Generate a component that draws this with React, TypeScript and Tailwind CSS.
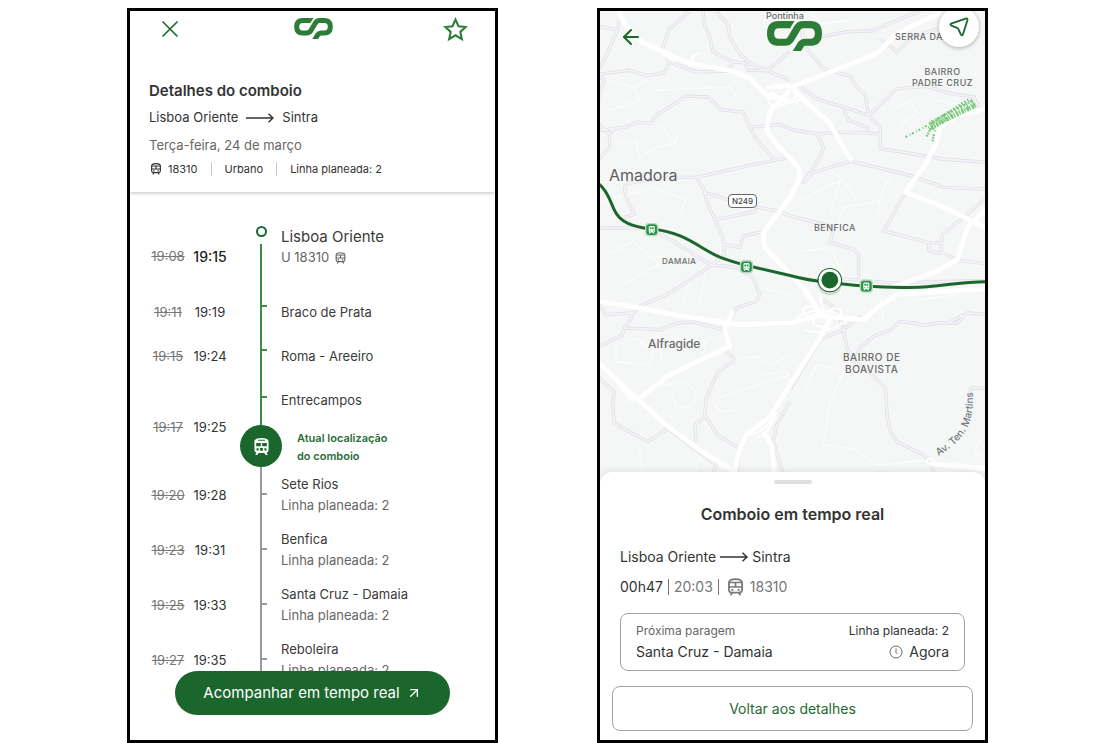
import { ArrowLeft, ArrowUpRight, X } from "lucide-react";

type Stop = {
  name: string;
  planned: string;
  expected: string;
  platform: number;
};

const upcomingStops: Stop[] = [
  { name: "Sete Rios", planned: "19:20", expected: "19:28", platform: 2 },
  { name: "Benfica", planned: "19:23", expected: "19:31", platform: 2 },
  { name: "Santa Cruz - Damaia", planned: "19:25", expected: "19:33", platform: 2 },
  { name: "Reboleira", planned: "19:27", expected: "19:35", platform: 2 },
];

const passedStops = [
  { name: "Braco de Prata", planned: "19:11", expected: "19:19" },
  { name: "Roma - Areeiro", planned: "19:15", expected: "19:24" },
];

// Map geometry, in map units (3 per pixel at the base width)
const streets = [
  "M30 80L85 90L45 180L30 205M90 60L85 90",
  "M30 222L120 210L170 226L225 218L240 185L218 150L238 90L300 33",
  "M238 185L320 215L410 213L430 185L465 188L475 210L530 211L600 155",
  "M340 33L345 75L360 110L370 155L430 185",
  "M380 33L415 75L420 110L450 160L480 190L530 211L600 240",
  "M30 390L110 380L140 365L185 368L200 345L290 287L355 290L395 328L460 335L480 380L495 410L555 480",
  "M480 380L570 372L605 387L680 400L770 395L870 400",
  "M30 225L45 240L30 290M30 370L60 400L62 440L30 475M60 400L75 385",
  "M635 85L640 135L700 205L780 228L795 255L825 285L835 345",
  "M690 110L770 95L850 92L920 60L990 33M870 115L920 155L960 115L1040 85",
  "M835 345L920 265L1010 258L1080 280L1150 290L1165 325",
  "M625 255L680 295L760 320L835 345L870 380L870 445L940 455L1050 475L1185 485",
  "M760 325L775 360L830 380L835 395",
  "M680 400L700 440L690 470L640 545L670 515L780 482L860 500L960 525L1060 560L1185 565",
  "M945 575L880 690L1015 725L1060 725M1015 725L1015 750L1050 757L1055 700L1130 640L1185 590",
  "M600 645L700 670L730 680L720 725L790 745L805 760L805 830M665 840L700 828L900 845L1185 838",
  "M1185 787L1100 778L1060 757",
  "M1070 965L1130 935L1185 940",
  "M600 470L500 490L320 530L345 570L350 600L400 710L405 760L370 790",
  "M320 530L230 530L115 548L105 560L110 590L135 640L105 650",
  "M345 575L480 615L560 630L600 645M375 657L460 640L500 630",
  "M405 730L450 740L460 705L530 690",
  "M30 682L170 680L250 720L360 790L440 800L490 830L510 880L500 900L440 920L420 960",
  "M370 790L250 870L210 890L150 915L120 950M30 910L50 940L130 935",
  "M30 1035L100 1000L105 980L215 985L260 965L310 962L400 985M105 980L130 948",
  "M30 1130L75 1170L70 1210L75 1265L175 1320L235 1280L320 1345L380 1390L365 1430",
  "M410 1050L435 1075L385 1110L350 1190L345 1240L385 1300L450 1340L440 1430",
  "M345 1245L315 1270L320 1320",
  "M600 1200L560 1270L550 1320L585 1430M600 1165L690 1015L760 985",
  "M760 985L770 1040L800 1085L850 1125L885 1160L890 1240L900 1290L920 1320L1000 1360L1020 1380L1035 1430",
  "M800 1060L810 1040L850 1005L900 985L930 960L970 965L1000 972L1040 965L1100 965L1120 945",
  "M1185 1160L1140 1160L1138 1200",
  "M760 985L740 925L700 895M760 985L810 945",
];

const highways = [
  "M90 33Q100 85 165 130L300 190L430 213L480 235L530 285L600 300",
  "M600 262L760 200L860 160L910 110L960 80L1050 40",
  "M600 270L540 335L530 390L560 430L625 500L630 530L600 590L520 695L525 740L640 860L700 950",
  "M610 270L720 370L770 460L785 480",
  "M1185 325L1100 345L1050 380L1035 430L1005 490L945 575L1050 615L1185 680",
  "M1185 625L1130 680L1100 775L1040 810L900 860",
  "M1185 862L920 880L860 920L820 955L700 945",
  "M30 900L150 920L280 945L450 970L600 965L700 940",
  "M430 930L405 985L420 1035L240 1120L150 1190L115 1190",
  "M30 1085L120 1170L230 1270L330 1345L435 1410",
  "M450 1340L470 1300L540 1245L600 1150L690 1010L720 950",
  "M520 1290L545 1330L555 1430M435 1410L450 1340",
  "M1020 1385L1185 1400M540 260L600 255",
];

const lanes = [
  "M60 240L130 260L180 240M130 260L150 300L60 330M200 270L420 260M420 260L440 290",
  "M90 430L140 420L150 470L200 440L250 430L270 400M210 370L260 430",
  "M40 600L200 560L290 600L270 640M60 760L130 720L210 790L100 850",
  "M280 910L300 840L350 810L330 900M520 860L600 880",
  "M640 600L700 560L750 540L720 640M740 680L760 620L870 600",
  "M860 640L880 560L900 530M640 750L720 740L760 820L750 880",
  "M80 1030L140 1010L190 1050L180 1090L80 1080L80 1030M200 1000L220 1080M260 1010L350 1020L340 1060",
  "M220 1150L280 1140L320 1170L310 1210L260 1220L245 1170M380 1190L600 1120M370 1200L390 1230L440 1225",
  "M440 1075L500 1065L540 1090L600 1060M510 1120L590 1110L600 1140M150 1330L160 1430M310 1430L330 1370",
  "M645 1160L680 1090L760 1110L720 1200L700 1330L790 1340L860 1390L1010 1375",
  "M700 490L760 540L800 600M1040 300L1100 310M900 330L960 300L980 340L930 370",
  "M880 960L870 890M960 900L1100 880M1170 1310L1150 1350L1185 1370M660 40L700 70L790 60",
];

const rail =
  "M28 549C55 567 65 607 75 627C92 665 130 677 185 684C290 692 340 752 400 772C440 786 470 794 500 800L600 823Q650 837 720 844Q800 854 850 856Q960 861 1010 857C1080 852 1120 841 1190 842";

function CpLogo({ className }: { className?: string }) {
  return (
    <svg viewBox="0 0 162 88" className={className} role="img" aria-label="CP">
      <path
        d="M66 10.500H35Q10.500 10.500 10.500 36.500T35 62.500H52Q64 62.500 70 53L89 21Q95 10.500 106 10.500H127Q151.500 10.500 151.500 36.500T127 62.500H113Q104 62.500 99 70L81 100"
        fill="none"
        stroke="#2c7d37"
        strokeWidth="21"
      />
      <path d="M64 0H81L68 21H64Z" fill="#2c7d37" />
    </svg>
  );
}

function TrainIcon({ className }: { className?: string }) {
  return (
    <svg viewBox="0 0 24 26" className={className} fill="none" stroke="currentColor" strokeWidth="2.500" aria-hidden="true">
      <path d="M2.500 7Q2.500 1.500 12 1.500T21.500 7V17Q21.500 21 17.500 21H6.500Q2.500 21 2.500 17Z" />
      <path d="M2.500 6.500H21.500M2.500 13H21.500M12 6.500V13M7 21.500L5 25M17 21.500L19 25" />
      <path d="M6 17H9M15 17H18" />
    </svg>
  );
}

function SolidTrainIcon({ className }: { className?: string }) {
  return (
    <svg viewBox="0 0 24 26" className={className} aria-hidden="true">
      <path
        fill="currentColor"
        fillRule="evenodd"
        d="M2 6Q2 1 12 1T22 6V18Q22 21 19 22L21 25H18L16 22H8L6 25H3L5 22Q2 21 2 18ZM7 3.500V5H17V3.500ZM4.500 8V12.500H11V8ZM13 8V12.500H19.500V8ZM5 15.500V18.500H8V15.500ZM16 15.500V18.500H19V15.500ZM10 15V19H14V15Z"
      />
    </svg>
  );
}

function LongArrow() {
  return (
    <svg viewBox="0 0 28 10" className="h-[10px] w-7" fill="none" stroke="currentColor" strokeWidth="1.500" aria-label="para">
      <path d="M0 5H27M22.500 0.700L27 5L22.500 9.300" />
    </svg>
  );
}

function Times({ planned, expected, strong }: { planned: string; expected: string; strong?: boolean }) {
  return (
    <div className="flex text-center text-[13px] leading-[21px]">
      <s className="w-[42px] text-[#777]">{planned}</s>
      <span className={strong ? "w-[42px] text-sm leading-[21px] font-medium text-[#222]" : "w-[42px] text-[#333]"}>
        {expected}
      </span>
    </div>
  );
}

function TrainDetails() {
  return (
    <section className="flex min-h-0 min-w-0 flex-col overflow-hidden border-[3px] border-black bg-white">
      <header className="z-10 shrink-0 pb-[13px] shadow-[0_1px_4px_rgba(0,0,0,0.25)]">
        <div className="flex items-start justify-between pr-[27px] pl-[26px] pt-1">
          <button type="button" aria-label="Fechar" className="text-[#1f6f30]">
            <X size={28} strokeWidth={1.5} />
          </button>
          <CpLogo className="mt-[3px] h-[21px] w-[39px]" />
          <button type="button" aria-label="Adicionar aos favoritos" className="pt-[2px] text-[#2c7d37]">
            <svg viewBox="0 0 24 24" className="size-[25px]" fill="none" stroke="currentColor" strokeWidth="2">
              <path d="M12 2.500L14.900 8.900L21.800 9.600L16.600 14.300L18.100 21.200L12 17.600L5.900 21.200L7.400 14.300L2.200 9.600L9.100 8.900Z" />
            </svg>
          </button>
        </div>
        <div className="pl-[19px] pt-[36px] text-[#333]">
          <h1 className="text-[15px] leading-6 font-semibold">Detalhes do comboio</h1>
          <p className="mt-1 flex items-center gap-2 text-[13px] leading-[21px]">
            Lisboa Oriente <LongArrow /> Sintra
          </p>
          <p className="mt-[7px] text-[13px] leading-[21px] text-[#666]">Terça-feira, 24 de março</p>
          <div className="mt-[3px] flex h-5 items-center text-[11px] leading-[14px]">
            <span className="flex items-center gap-1.5 pr-[13px] pl-px">
              <TrainIcon className="size-3" /> 18310
            </span>
            <span className="border-l border-[#ccc] px-[13px]">Urbano</span>
            <span className="border-l border-[#ccc] pl-[13px]">Linha planeada: 2</span>
          </div>
        </div>
      </header>

      <ol className="min-h-0 flex-1 overflow-hidden pt-[34px] pl-[17px] text-[13px] leading-[21px] text-[#3a3a3a] *:grid *:grid-cols-[94px_40px_1fr]">
        <li className="h-[64px]">
          <div className="pt-5">
            <Times planned="19:08" expected="19:15" strong />
          </div>
          <div className="flex flex-col items-center gap-[7px]">
            <span className="size-[11px] rounded-full border-2 border-[#1b662c]" />
            <span className="w-0.5 flex-1 bg-[#3c8c49]" />
          </div>
          <div>
            <p className="text-[15px] leading-[21px]">Lisboa Oriente</p>
            <p className="flex items-center gap-1.5 text-[#666]">
              U 18310 <TrainIcon className="h-3 w-[11px]" />
            </p>
          </div>
        </li>
        {passedStops.map((stop) => (
          <li key={stop.name} className="h-11 items-center">
            <Times planned={stop.planned} expected={stop.expected} />
            <div className="ml-[19px] h-full border-l-2 border-[#3c8c49] pt-[15px]">
              <div className="h-0.5 w-[5px] bg-[#3c8c49]" />
            </div>
            <p>{stop.name}</p>
          </li>
        ))}
        <li className="h-[92px]">
          <div className="pt-[39px]">
            <Times planned="19:17" expected="19:25" />
          </div>
          <div className="flex flex-col">
            <div className="ml-[19px] h-[47px] border-l-2 border-[#3c8c49] pt-[18px]">
              <div className="h-0.5 w-[5px] bg-[#3c8c49]" />
            </div>
            <div className="flex size-[42px] shrink-0 items-center justify-center self-center rounded-full bg-[#1b662c] text-white">
              <SolidTrainIcon className="h-[19px] w-[17px]" />
            </div>
            <div className="ml-[19px] flex-1 border-l-2 border-[#999]" />
          </div>
          <div>
            <p className="leading-[44px]">Entrecampos</p>
            <p className="pt-[7px] pl-4 text-[11px] leading-[18px] font-semibold text-[#2a6e38]">
              Atual localização
              <br />
              do comboio
            </p>
          </div>
        </li>
        {upcomingStops.map((stop) => (
          <li key={stop.name} className="h-[55px]">
            <div className="pt-[15px]">
              <Times planned={stop.planned} expected={stop.expected} />
            </div>
            <div className="ml-[19px] border-l-2 border-[#999] pt-[23px]">
              <div className="h-0.5 w-[5px] bg-[#999]" />
            </div>
            <div className="pt-1">
              <p>{stop.name}</p>
              <p className="text-[#666]">Linha planeada: {stop.platform}</p>
            </div>
          </li>
        ))}
      </ol>

      <footer className="shrink-0 px-[45px] pb-[25px]">
        <button
          type="button"
          className="flex h-11 w-full items-center justify-center gap-1.5 rounded-full bg-[#1b662c] text-[15px] text-white"
        >
          Acompanhar em tempo real <ArrowUpRight size={16} strokeWidth={2} />
        </button>
      </footer>
    </section>
  );
}

function Station({ x, y }: { x: number; y: number }) {
  return (
    <g transform={`translate(${x} ${y})`}>
      <rect x="-20" y="-20" width="40" height="40" rx="12" fill="#b9dcbf" />
      <rect x="-16" y="-16" width="32" height="32" rx="9" fill="#27924a" />
      <path
        fill="#fff"
        fillRule="evenodd"
        d="M-9 -7Q-9 -11 -5 -11H5Q9 -11 9 -7V6Q9 9 6 9L9 12H5L3 9H-3L-5 12H-9L-6 9Q-9 9 -9 6ZM-6 -7V-1H-1V-7ZM1 -7V-1H6V-7ZM-6 3V6H-3V3ZM3 3V6H6V3Z"
      />
    </g>
  );
}

function CityMap() {
  return (
    <div className="relative min-h-0 flex-1 overflow-hidden bg-[#f5f7f6] font-medium text-[#6b6b6b]">
      <svg viewBox="30 33 1155 1413" preserveAspectRatio="xMidYMin slice" className="h-full w-full" aria-hidden="true">
        <g fill="none" strokeLinejoin="round">
          <path d={lanes.join("")} stroke="#fbfcfc" strokeWidth="4" />
          <path d={streets.join("")} stroke="#e1e0e8" strokeWidth="10" />
          <path d={streets.join("")} stroke="#f4f4f8" strokeWidth="5" />
          <path d={highways.join("")} stroke="#fff" strokeWidth="14" />
          {/* interchanges */}
          <g stroke="#fff" strokeWidth="6">
            <path d="M530 265Q570 240 620 270Q630 300 560 320Q520 310 545 275Q590 330 640 290M200 130Q205 160 260 185M310 190Q300 165 330 160" />
            <ellipse cx="660" cy="930" rx="22" ry="15" />
            <ellipse cx="695" cy="960" rx="26" ry="16" />
            <ellipse cx="735" cy="935" rx="18" ry="14" />
            <path d="M620 950Q690 900 790 960M640 985Q700 1010 790 945M690 880Q690 920 720 960" />
            <path d="M90 1150Q110 1195 150 1185M480 1300Q520 1290 550 1250M500 1310Q540 1290 560 1230" />
            <circle cx="1018" cy="1378" r="8" />
          </g>
        </g>

        {/* allotments */}
        <g fill="none" stroke="#5fbf5f" strokeWidth="6" opacity="0.85">
          <path d="M945 410L1010 375L1060 345L1150 298" strokeDasharray="6 8 3 5" />
          <path d="M1015 385L1080 350L1155 315" strokeWidth="14" strokeDasharray="3 5 6 3" />
          <path d="M1020 370L1075 335L1135 297" strokeWidth="9" strokeDasharray="4 6" />
          <path d="M1020 374L1150 305" strokeWidth="24" strokeDasharray="2 6 4 7" />
          <path d="M1008 408L1024 378L1034 392M1026 422L1030 400" strokeDasharray="5 3" />
        </g>

        <path d={rail} fill="none" stroke="#1b662c" strokeWidth="9" />
        <Station x={187} y={686} />
        <Station x={470} y={797} />
        <Station x={828} y={855} />
        <circle cx="719" cy="843" r="39" fill="#000" opacity="0.12" />
        <circle cx="719" cy="837" r="35" fill="#fff" stroke="#1b662c" strokeWidth="3" />
        <circle cx="719" cy="837" r="25" fill="#1b662c" />

        <path id="av-ten-martins" d="M1044 1362C1090 1332 1155 1290 1146 1175" fill="none" />
        <text fill="#777b84" fontSize="30" className="font-[Inter]">
          <textPath href="#av-ten-martins">Av. Ten. Martins</textPath>
        </text>
      </svg>

      <span className="absolute top-0 left-[166px] text-[9px] leading-[10px]">Pontinha</span>
      <span className="absolute top-5 left-[295px] text-[9px] leading-3 tracking-wider">SERRA DA</span>
      <span className="absolute top-[55px] left-[312px] text-center text-[9px] leading-[11px] tracking-wider">
        BAIRRO
        <br />
        PADRE CRUZ
      </span>
      <span className="absolute top-[154px] left-[9px] text-base leading-5 font-normal text-[#5e5e5e]">Amadora</span>
      <span className="absolute top-[183px] left-[128px] rounded-sm border border-[#666] bg-white px-[3px] text-[8px] leading-3 text-[#444]">
        N249
      </span>
      <span className="absolute top-[211px] left-[214px] text-[9px] leading-3 tracking-wider">BENFICA</span>
      <span className="absolute top-[244px] left-[62px] text-[8px] leading-3 tracking-wider">DAMAIA</span>
      <span className="absolute top-[325px] left-12 text-xs leading-4">Alfragide</span>
      <span className="absolute top-[340px] left-[243px] text-center text-[10px] leading-3 tracking-wider">
        BAIRRO DE
        <br />
        BOAVISTA
      </span>

      <button type="button" aria-label="Voltar" className="absolute top-[14px] left-[19px] text-[#1b662c]">
        <ArrowLeft size={24} strokeWidth={2} />
      </button>
      <CpLogo className="absolute top-[10px] left-[167px] h-[30px] w-[55px]" />
      <button
        type="button"
        aria-label="Centrar no comboio"
        className="absolute -top-1 right-[6px] flex size-10 items-center justify-center rounded-full bg-white text-[#1b662c] shadow-[0_1px_4px_rgba(0,0,0,0.3)]"
      >
        <svg
          viewBox="0 0 20 20"
          className="size-5"
          fill="none"
          stroke="currentColor"
          strokeWidth="1.800"
          strokeLinejoin="round"
          aria-hidden="true"
        >
          <path d="M2.200 6.600L16.600 1.600Q19 1 18.400 3.200L14 17.200Q13 19.600 11.800 17.400L9.400 12.200Q9 11.200 8 10.800L2.400 8.600Q0.600 7.400 2.200 6.600Z" />
        </svg>
      </button>
    </div>
  );
}

function LiveTrain() {
  return (
    <section className="flex min-h-0 min-w-0 flex-col overflow-hidden border-[3px] border-black bg-white">
      <CityMap />
      <div className="relative -mt-3 shrink-0 rounded-t-xl bg-white px-3 pt-2 pb-[9px] text-[#333] shadow-[0_-2px_6px_rgba(0,0,0,0.08)]">
        <div className="mx-auto h-1 w-[38px] rounded-full bg-[#dedede]" />
        <h2 className="mt-[18px] text-center text-base leading-6 font-semibold">Comboio em tempo real</h2>
        <div className="px-2">
          <p className="mt-5 flex items-center gap-1 text-sm leading-[21px]">
            Lisboa Oriente <LongArrow /> Sintra
          </p>
          <p className="mt-[9px] flex items-center text-sm leading-[21px] text-[#777]">
            <span className="text-[#333]">00h47</span>
            <span className="ml-[5px] h-4 border-l border-[#777]" />
            <span className="ml-[5px]">20:03</span>
            <span className="mr-2 ml-[5px] h-4 border-l border-[#777]" />
            <TrainIcon className="mr-[6px] h-[18px] w-[17px]" />
            18310
          </p>
          <div className="mt-4 flex justify-between rounded-lg border border-[#a3a3a3] px-[15px] pt-1.5 pb-2 leading-[21px]">
            <div>
              <p className="text-xs leading-[21px] text-[#666]">Próxima paragem</p>
              <p className="text-sm leading-[21px]">Santa Cruz - Damaia</p>
            </div>
            <div className="text-right">
              <p className="text-xs leading-[21px]">Linha planeada: 2</p>
              <p className="flex items-center justify-end gap-1.5 text-sm leading-[21px]">
                <svg viewBox="0 0 14 14" className="size-[14px] text-[#666]" fill="none" stroke="currentColor" aria-hidden="true">
                  <circle cx="7" cy="7" r="6" />
                  <path d="M7 3.500V7.500L8.500 9" />
                </svg>
                Agora
              </p>
            </div>
          </div>
        </div>
        <button
          type="button"
          className="mt-[15px] h-[45px] w-full rounded-lg border border-[#a3a3a3] text-sm text-[#1f6a30]"
        >
          Voltar aos detalhes
        </button>
      </div>
    </section>
  );
}

export default function App() {
  return (
    <main className="grid h-screen min-h-[640px] grid-cols-[371fr_391fr] gap-[99px] bg-white px-[127px] pt-2 font-[Inter,'Liberation_Sans',sans-serif]">
      <TrainDetails />
      <LiveTrain />
    </main>
  );
}
